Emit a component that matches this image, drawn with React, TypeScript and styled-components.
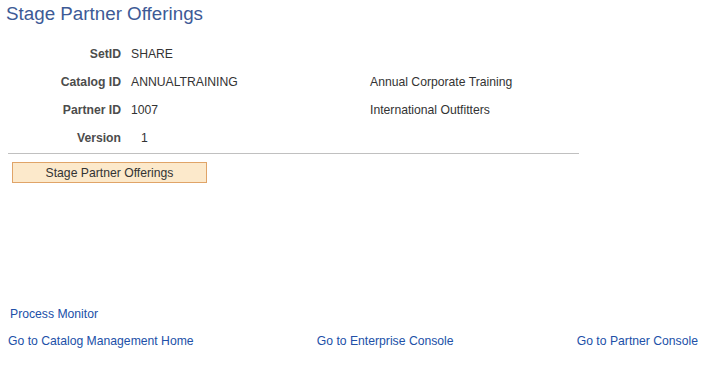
import * as React from 'react'
import styled, { createGlobalStyle } from 'styled-components'

const Global = createGlobalStyle`
  body {
    margin: 0;
    background: #ffffff;
    font-family: "Liberation Sans", Arial, sans-serif;
  }
`

const Page = styled.div`
  width: 703px;
  height: 366px;
  display: flex;
  flex-direction: column;
`

const Title = styled.h1`
  margin: 0;
  padding: 3px 0 0 6px;
  font-size: 18.8px;
  font-weight: normal;
  color: #3d5a96;
  line-height: 22px;
`

const Fields = styled.div`
  display: grid;
  grid-template-columns: 121px 229px auto;
  grid-auto-rows: 15px;
  column-gap: 10px;
  row-gap: 13px;
  margin-top: 22px;
  font-size: 12.2px;
  line-height: 15px;
`

const Label = styled.div`
  text-align: right;
  font-weight: bold;
  color: #4c4c4c;
`

const Value = styled.div<{ $indent?: boolean }>`
  color: #333333;
  padding-left: ${(p) => (p.$indent ? '10px' : '0')};
`

const Rule = styled.hr`
  margin: 7px 0 0 8px;
  width: 571px;
  border: 0;
  border-top: 1px solid #c0c0c0;
`

const StageButton = styled.button`
  margin: 8px 0 0 12px;
  width: 195px;
  height: 21px;
  background: #fce9cb;
  border: 1px solid #e0a468;
  font-family: "Liberation Sans", Arial, sans-serif;
  font-size: 12.2px;
  color: #333333;
  padding: 0;
  cursor: pointer;
`

const Links = styled.div`
  margin-top: auto;
  padding-bottom: 17px;
  font-size: 12.2px;
  line-height: 15px;
`

const Link = styled.a`
  color: #2150a8;
  text-decoration: none;
  cursor: pointer;
`

const Single = styled.div`
  padding-left: 10px;
  margin-bottom: 12px;
`

const NavRow = styled.div`
  display: flex;
  justify-content: space-between;
  padding: 0 5px 0 8px;
`

export default function App() {
  return (
    <Page>
      <Global />
      <Title>Stage Partner Offerings</Title>
      <Fields>
        <Label>SetID</Label>
        <Value>SHARE</Value>
        <Value />
        <Label>Catalog ID</Label>
        <Value>ANNUALTRAINING</Value>
        <Value>Annual Corporate Training</Value>
        <Label>Partner ID</Label>
        <Value>1007</Value>
        <Value>International Outfitters</Value>
        <Label>Version</Label>
        <Value $indent>1</Value>
        <Value />
      </Fields>
      <Rule />
      <div>
        <StageButton>Stage Partner Offerings</StageButton>
      </div>
      <Links>
        <Single>
          <Link>Process Monitor</Link>
        </Single>
        <NavRow>
          <Link>Go to Catalog Management Home</Link>
          <Link>Go to Enterprise Console</Link>
          <Link>Go to Partner Console</Link>
        </NavRow>
      </Links>
    </Page>
  )
}
